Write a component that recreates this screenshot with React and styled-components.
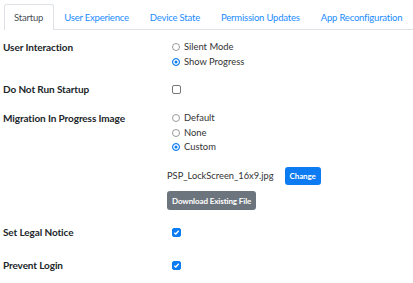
import styled, { createGlobalStyle } from "styled-components";

const Global = createGlobalStyle`
  body {
    margin: 0;
    background: #fff;
    font-family: Lato, "Noto Sans", sans-serif;
    color: #212529;
  }
`;

const Page = styled.div`
  padding: 4px 0 0 3px;
`;

const Tabs = styled.div`
  display: flex;
  border-bottom: 1px solid #dee2e6;
  height: 25px;
  margin-left: 1px;
`;

const Tab = styled.div`
  padding: 0 10px 0 9px;
  display: flex;
  align-items: center;
  white-space: nowrap;
  font-size: 9.5px;
  letter-spacing: -0.2px;
  color: ${(p) => (p.active ? "#495057" : "#1a8cff")};
  background: ${(p) => (p.active ? "#fff" : "transparent")};
  border: 1px solid ${(p) => (p.active ? "#dee2e6" : "transparent")};
  border-bottom: none;
  border-radius: 3px 3px 0 0;
  margin-bottom: -1px;
  box-sizing: border-box;
  height: 26px;
`;

const Form = styled.div`
  padding: 10px 0 0 0;
`;

const Row = styled.div`
  display: grid;
  grid-template-columns: 164px 1fr;
  margin-bottom: ${(p) => p.gap || 14}px;
`;

const Label = styled.div`
  font-weight: 700;
  font-size: 10px;
  letter-spacing: -0.1px;
  line-height: 14px;
`;

const Options = styled.div`
  display: flex;
  flex-direction: column;
`;

const Option = styled.label`
  display: flex;
  align-items: center;
  gap: 4px;
  font-size: 9.4px;
  line-height: 14.5px;
  color: #333;
  padding-left: 5px;
`;

const Radio = styled.span`
  width: 8px;
  height: 8px;
  border-radius: 50%;
  box-sizing: border-box;
  border: 1px solid ${(p) => (p.checked ? "#0d7cf2" : "#9a9a9a")};
  background: ${(p) => (p.checked ? "#0d7cf2" : "#fff")};
  box-shadow: ${(p) => (p.checked ? "inset 0 0 0 1.5px #fff" : "none")};
`;

const Check = styled.span`
  margin: 3px 0 0 5px;
  width: 9px;
  height: 9px;
  border-radius: 2px;
  box-sizing: border-box;
  border: 1px solid ${(p) => (p.checked ? "#0d7cf2" : "#777")};
  background: ${(p) => (p.checked ? "#0d7cf2" : "#fff")};
  display: flex;
  align-items: center;
  justify-content: center;
`;

const FileLine = styled.div`
  display: flex;
  align-items: center;
  gap: 11px;
  margin-top: 12px;
  font-size: 9.3px;
  color: #333;
`;

const Button = styled.button`
  border: none;
  border-radius: 3px;
  font-family: inherit;
  font-weight: 700;
  font-size: 8px;
  letter-spacing: -0.1px;
  color: #fff;
  background: ${(p) => (p.variant === "gray" ? "#6c757d" : "#0d7cf2")};
  height: ${(p) => (p.variant === "gray" ? 19 : 18)}px;
  padding: 0 5px;
`;

const DownloadWrap = styled.div`
  margin-top: 3px;
`;

const Tick = () => (
  <svg width="7" height="7" viewBox="0 0 8 8">
    <path d="M1.5 4.2 L3.2 5.8 L6.5 2" stroke="#fff" strokeWidth="1.6" fill="none" />
  </svg>
);

const App = () => {
  return (
    <Page>
      <Global />
      <Tabs>
        <Tab active>Startup</Tab>
        <Tab>User Experience</Tab>
        <Tab>Device State</Tab>
        <Tab>Permission Updates</Tab>
        <Tab>App Reconfiguration</Tab>
      </Tabs>
      <Form>
        <Row gap={13}>
          <Label>User Interaction</Label>
          <Options>
            <Option><Radio />Silent Mode</Option>
            <Option><Radio checked />Show Progress</Option>
          </Options>
        </Row>
        <Row gap={15}>
          <Label>Do Not Run Startup</Label>
          <div><Check /></div>
        </Row>
        <Row gap={15}>
          <Label>Migration In Progress Image</Label>
          <div>
            <Options>
              <Option><Radio />Default</Option>
              <Option><Radio />None</Option>
              <Option><Radio checked />Custom</Option>
            </Options>
            <FileLine>
              PSP_LockScreen_16x9.jpg
              <Button>Change</Button>
            </FileLine>
            <DownloadWrap>
              <Button variant="gray">Download Existing File</Button>
            </DownloadWrap>
          </div>
        </Row>
        <Row gap={19}>
          <Label>Set Legal Notice</Label>
          <div><Check checked><Tick /></Check></div>
        </Row>
        <Row>
          <Label>Prevent Login</Label>
          <div><Check checked><Tick /></Check></div>
        </Row>
      </Form>
    </Page>
  );
};

export default App;
